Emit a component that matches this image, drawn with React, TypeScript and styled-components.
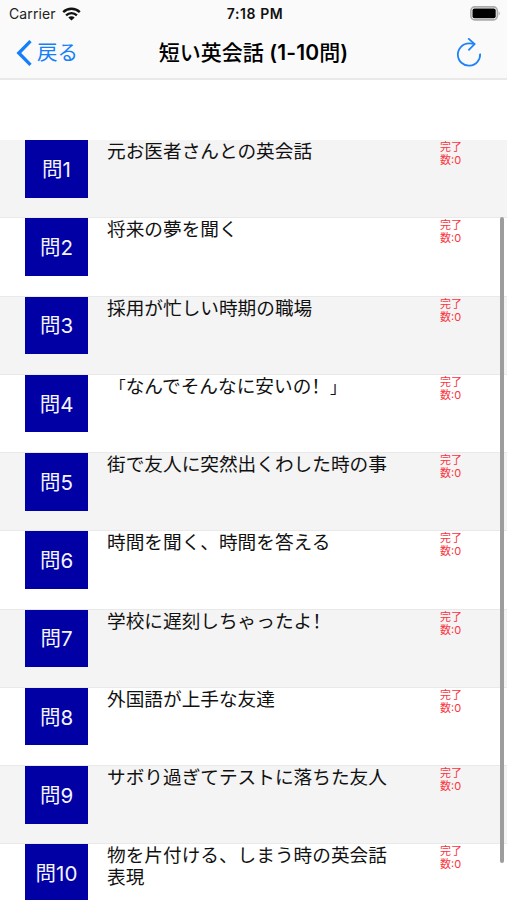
import React from "react";
import styled, { createGlobalStyle } from "styled-components";

const GlobalStyle = createGlobalStyle`
  * { box-sizing: border-box; }
  html, body { margin: 0; padding: 0; background: #fff; overflow: hidden; }
  body { font-family: Inter, "Noto Sans CJK JP", sans-serif; color: #111; }
`;

const Screen = styled.div`
  position: relative;
  width: 507px;
  height: 900px;
  overflow: hidden;
  background: #fff;
`;

const Header = styled.header`
  height: 80px;
  background: #fafafa;
  border-bottom: 2px solid #e9e9e9;
`;

const StatusBar = styled.div`
  display: grid;
  grid-template-columns: 1fr auto 1fr;
  align-items: center;
  height: 27px;
  padding: 0 6px 0 9px;
`;

const Carrier = styled.div`
  display: flex;
  align-items: center;
  gap: 6px;
  font-size: 14px;
  letter-spacing: 0.1px;
  color: #222;
`;

const Clock = styled.div`
  font-size: 14px;
  font-weight: 600;
  letter-spacing: 0.6px;
  color: #111;
`;

const Battery = styled.svg`
  justify-self: end;
`;

const NavBar = styled.nav`
  display: grid;
  grid-template-columns: 1fr auto 1fr;
  align-items: center;
  height: 51px;
  padding: 0 25px 0 16px;
`;

const BackButton = styled.a`
  display: flex;
  align-items: center;
  gap: 5px;
  color: #147efb;
  font-size: 20.5px;
  line-height: 30px;
`;

const Title = styled.h1`
  margin: 1px 0 0 9px;
  font-size: 21px;
  line-height: 30px;
  font-weight: 500;
  color: #000;
  white-space: nowrap;
`;

const Range = styled.span`
  font-size: 21px;
  font-weight: 600;
  letter-spacing: 0.15px;
`;

const RefreshIcon = styled.svg`
  justify-self: end;
`;

const List = styled.ul`
  margin: 60px 0 0;
  padding: 0;
  list-style: none;
`;

const Row = styled.li<{ $shaded: boolean }>`
  display: flex;
  align-items: flex-start;
  height: 78.25px;
  padding-left: 25px;
  background: ${(p) => (p.$shaded ? "#f4f4f4" : "#fff")};
  box-shadow: inset 0 -1px 0 #e9e9e9;
`;

const Badge = styled.div`
  display: flex;
  flex: none;
  align-items: center;
  justify-content: center;
  width: 63px;
  height: 57.6px;
  padding-top: 2px;
  background: #0000a5;
  color: #f4f4ff;
  font-size: 20.5px;
  line-height: 56px;
`;

const Topic = styled.div`
  flex: none;
  width: 290px;
  margin: -0.8px 0 0 19px;
  font-family: "Noto Sans CJK JP", sans-serif;
  font-size: 18.67px;
  line-height: 22px;
`;

const Mark = styled.span`
  font-family: "Noto Sans CJK SC", sans-serif;
`;

const Bracket = styled.span<{ $side: "left" | "right" }>`
  display: inline-block;
  width: 18.67px;
  font-size: 16px;
  text-align: ${(p) => p.$side};
`;

const Count = styled.div`
  width: 24px;
  margin: 1px 0 0 43px;
  color: #fb3340;
  font-size: 11px;
  line-height: 13px;
  white-space: nowrap;
`;

const ScrollThumb = styled.div`
  position: absolute;
  top: 217px;
  right: 3px;
  width: 4px;
  height: 646px;
  border-radius: 2px;
  background: #9d9d9d;
`;

const topics: React.ReactNode[] = [
  "元お医者さんとの英会話",
  "将来の夢を聞く",
  "採用が忙しい時期の職場",
  <>
    <Bracket $side="right">「</Bracket>なんでそんなに安いの<Mark>！</Mark>
    <Bracket $side="left">」</Bracket>
  </>,
  "街で友人に突然出くわした時の事",
  "時間を聞く、時間を答える",
  <>学校に遅刻しちゃったよ<Mark>！</Mark></>,
  "外国語が上手な友達",
  "サボり過ぎてテストに落ちた友人",
  "物を片付ける、しまう時の英会話表現",
];

export default function App() {
  return (
    <>
      <GlobalStyle />
      <Screen>
        <Header>
          <StatusBar>
            <Carrier>
              Carrier
              <svg width="19" height="14" viewBox="0 0 19 14" fill="none" stroke="#111" strokeWidth="2.4">
                <path d="M1.2 5.1a12 12 0 0 1 16.6 0" />
                <path d="M4.1 8.3a7.8 7.8 0 0 1 10.8 0" />
                <path d="M9.5 13.6 6.3 10.5a4.6 4.6 0 0 1 6.4 0Z" fill="#111" stroke="none" />
              </svg>
            </Carrier>
            <Clock>7:18 PM</Clock>
            <Battery width="31" height="15" viewBox="0 0 31 15">
              <rect x="0.9" y="0.9" width="26.4" height="13" rx="3.8" fill="#fafafa" stroke="#aaa" strokeWidth="1.6" />
              <rect x="2.5" y="2.5" width="23.2" height="9.8" rx="2" fill="#000" />
              <path d="M28.6 5.2q2.4 2.2 0 4.5Z" fill="#aaa" />
            </Battery>
          </StatusBar>
          <NavBar>
            <BackButton>
              <svg width="16" height="26" viewBox="0 0 16 26" fill="none" stroke="#147efb" strokeWidth="3.3">
                <path d="M14.5 1.2 2.8 13l11.7 11.8" />
              </svg>
              戻る
            </BackButton>
            <Title>
              短い英会話 <Range>(1-10</Range>問<Range>)</Range>
            </Title>
            <RefreshIcon width="26" height="30" viewBox="0 0 26 30" fill="none" stroke="#1f83f7" strokeWidth="1.8">
              <path d="M24.1 15.6A11.15 11.15 0 1 1 13 5.4q3 0 5.4.6" />
              <path d="M12.2 0.4l6.4 5.7-6.2 6.3" />
            </RefreshIcon>
          </NavBar>
        </Header>
        <List>
          {topics.map((topic, i) => (
            <Row key={i} $shaded={i % 2 === 0}>
              <Badge>問{i + 1}</Badge>
              <Topic>{topic}</Topic>
              <Count>
                完了
                <br />
                数:0
              </Count>
            </Row>
          ))}
        </List>
        <ScrollThumb />
      </Screen>
    </>
  );
}
